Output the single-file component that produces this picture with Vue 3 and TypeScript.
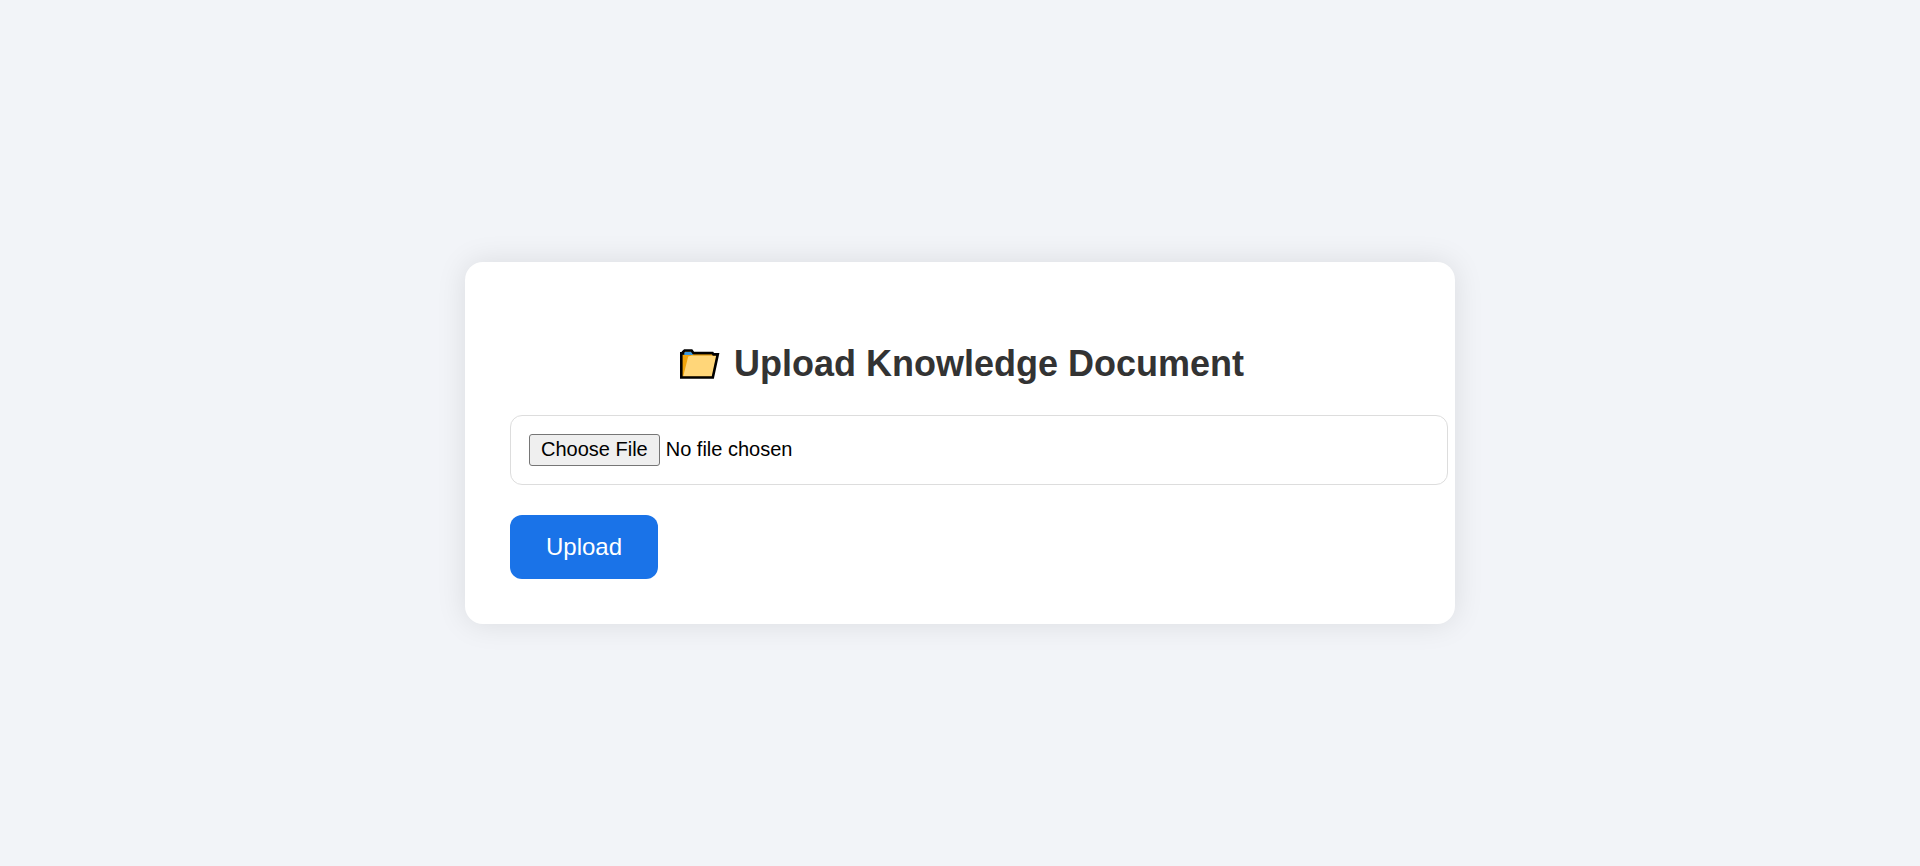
<script setup lang="ts">
import { ref } from 'vue'

const selectedFile = ref<File | null>(null)

function onFileChange(event: Event): void {
  const input = event.target as HTMLInputElement
  selectedFile.value = input.files?.[0] ?? null
}

function onSubmit(): void {
  if (!selectedFile.value) return
  const body = new FormData()
  body.append('file', selectedFile.value)
}
</script>

<template>
  <main class="page">
    <section class="card">
      <h2 id="upload-title" class="title">
        <svg class="folder" viewBox="0 0 48 48" aria-hidden="true">
          <path d="M5.3 40.5V16.4H7V15L8.6 13.5H15.6L17.4 16H36.5L37.5 17.4H41.8L36.8 40.5Z" fill="#f0a30a" />
          <path d="M8 18V16L9.5 14.8H15.2L17 16.8V18Z" fill="#3a96dd" />
          <path d="M17.4 17H36.8V18.6H17.4Z" fill="#ba7c04" />
          <path d="M12.2 19.4L16 18.5H40.6L36 39.5H7.2Z" fill="#ffd679" />
          <path d="M5.3 40.5V16.4H7V15L8.6 13.5H15.6L17.4 16H36.5L37.5 17.4H41.8L36.8 40.5Z" fill="none" stroke="#000" stroke-width="2.6" />
        </svg>
        Upload Knowledge Document
      </h2>
      <form @submit.prevent="onSubmit">
        <input class="file" type="file" aria-labelledby="upload-title" @change="onFileChange" />
        <button class="submit" type="submit">Upload</button>
      </form>
    </section>
  </main>
</template>

<style>
body {
  margin: 0;
  background: #f2f4f8;
}
</style>

<style scoped>
.page {
  box-sizing: border-box;
  min-height: 100vh;
  padding-top: 20px;
  display: flex;
  align-items: center;
  justify-content: center;
  font-family: "Liberation Sans", Arial, sans-serif;
}

.card {
  width: 100%;
  max-width: 900px;
  padding: 45px;
  border-radius: 18px;
  background: #fff;
  box-shadow: 0 0 30px rgba(0, 0, 0, 0.1);
}

.title {
  margin: 30px 0;
  color: #333;
  font-size: 36px;
  font-weight: 700;
  text-align: center;
}

.folder {
  width: 48px;
  height: 48px;
  vertical-align: -9px;
}

.file {
  display: block;
  box-sizing: content-box;
  width: 100%;
  height: 32px;
  margin-bottom: 30px;
  padding: 18px;
  border: 1px solid #ddd;
  border-radius: 12px;
  color: #000;
  font-family: inherit;
  font-size: 20px;
}

.file::file-selector-button {
  height: 32px;
  margin-right: 6px;
  padding: 0 11px 2px;
  border: 1px solid #767676;
  border-radius: 3px;
  background: #efefef;
  color: #000;
  font: inherit;
}

.submit {
  display: block;
  height: 64px;
  padding: 18px 36px;
  border: none;
  border-radius: 12px;
  background: #1a73e8;
  color: #fff;
  font-family: inherit;
  font-size: 24px;
  cursor: pointer;
}
</style>
